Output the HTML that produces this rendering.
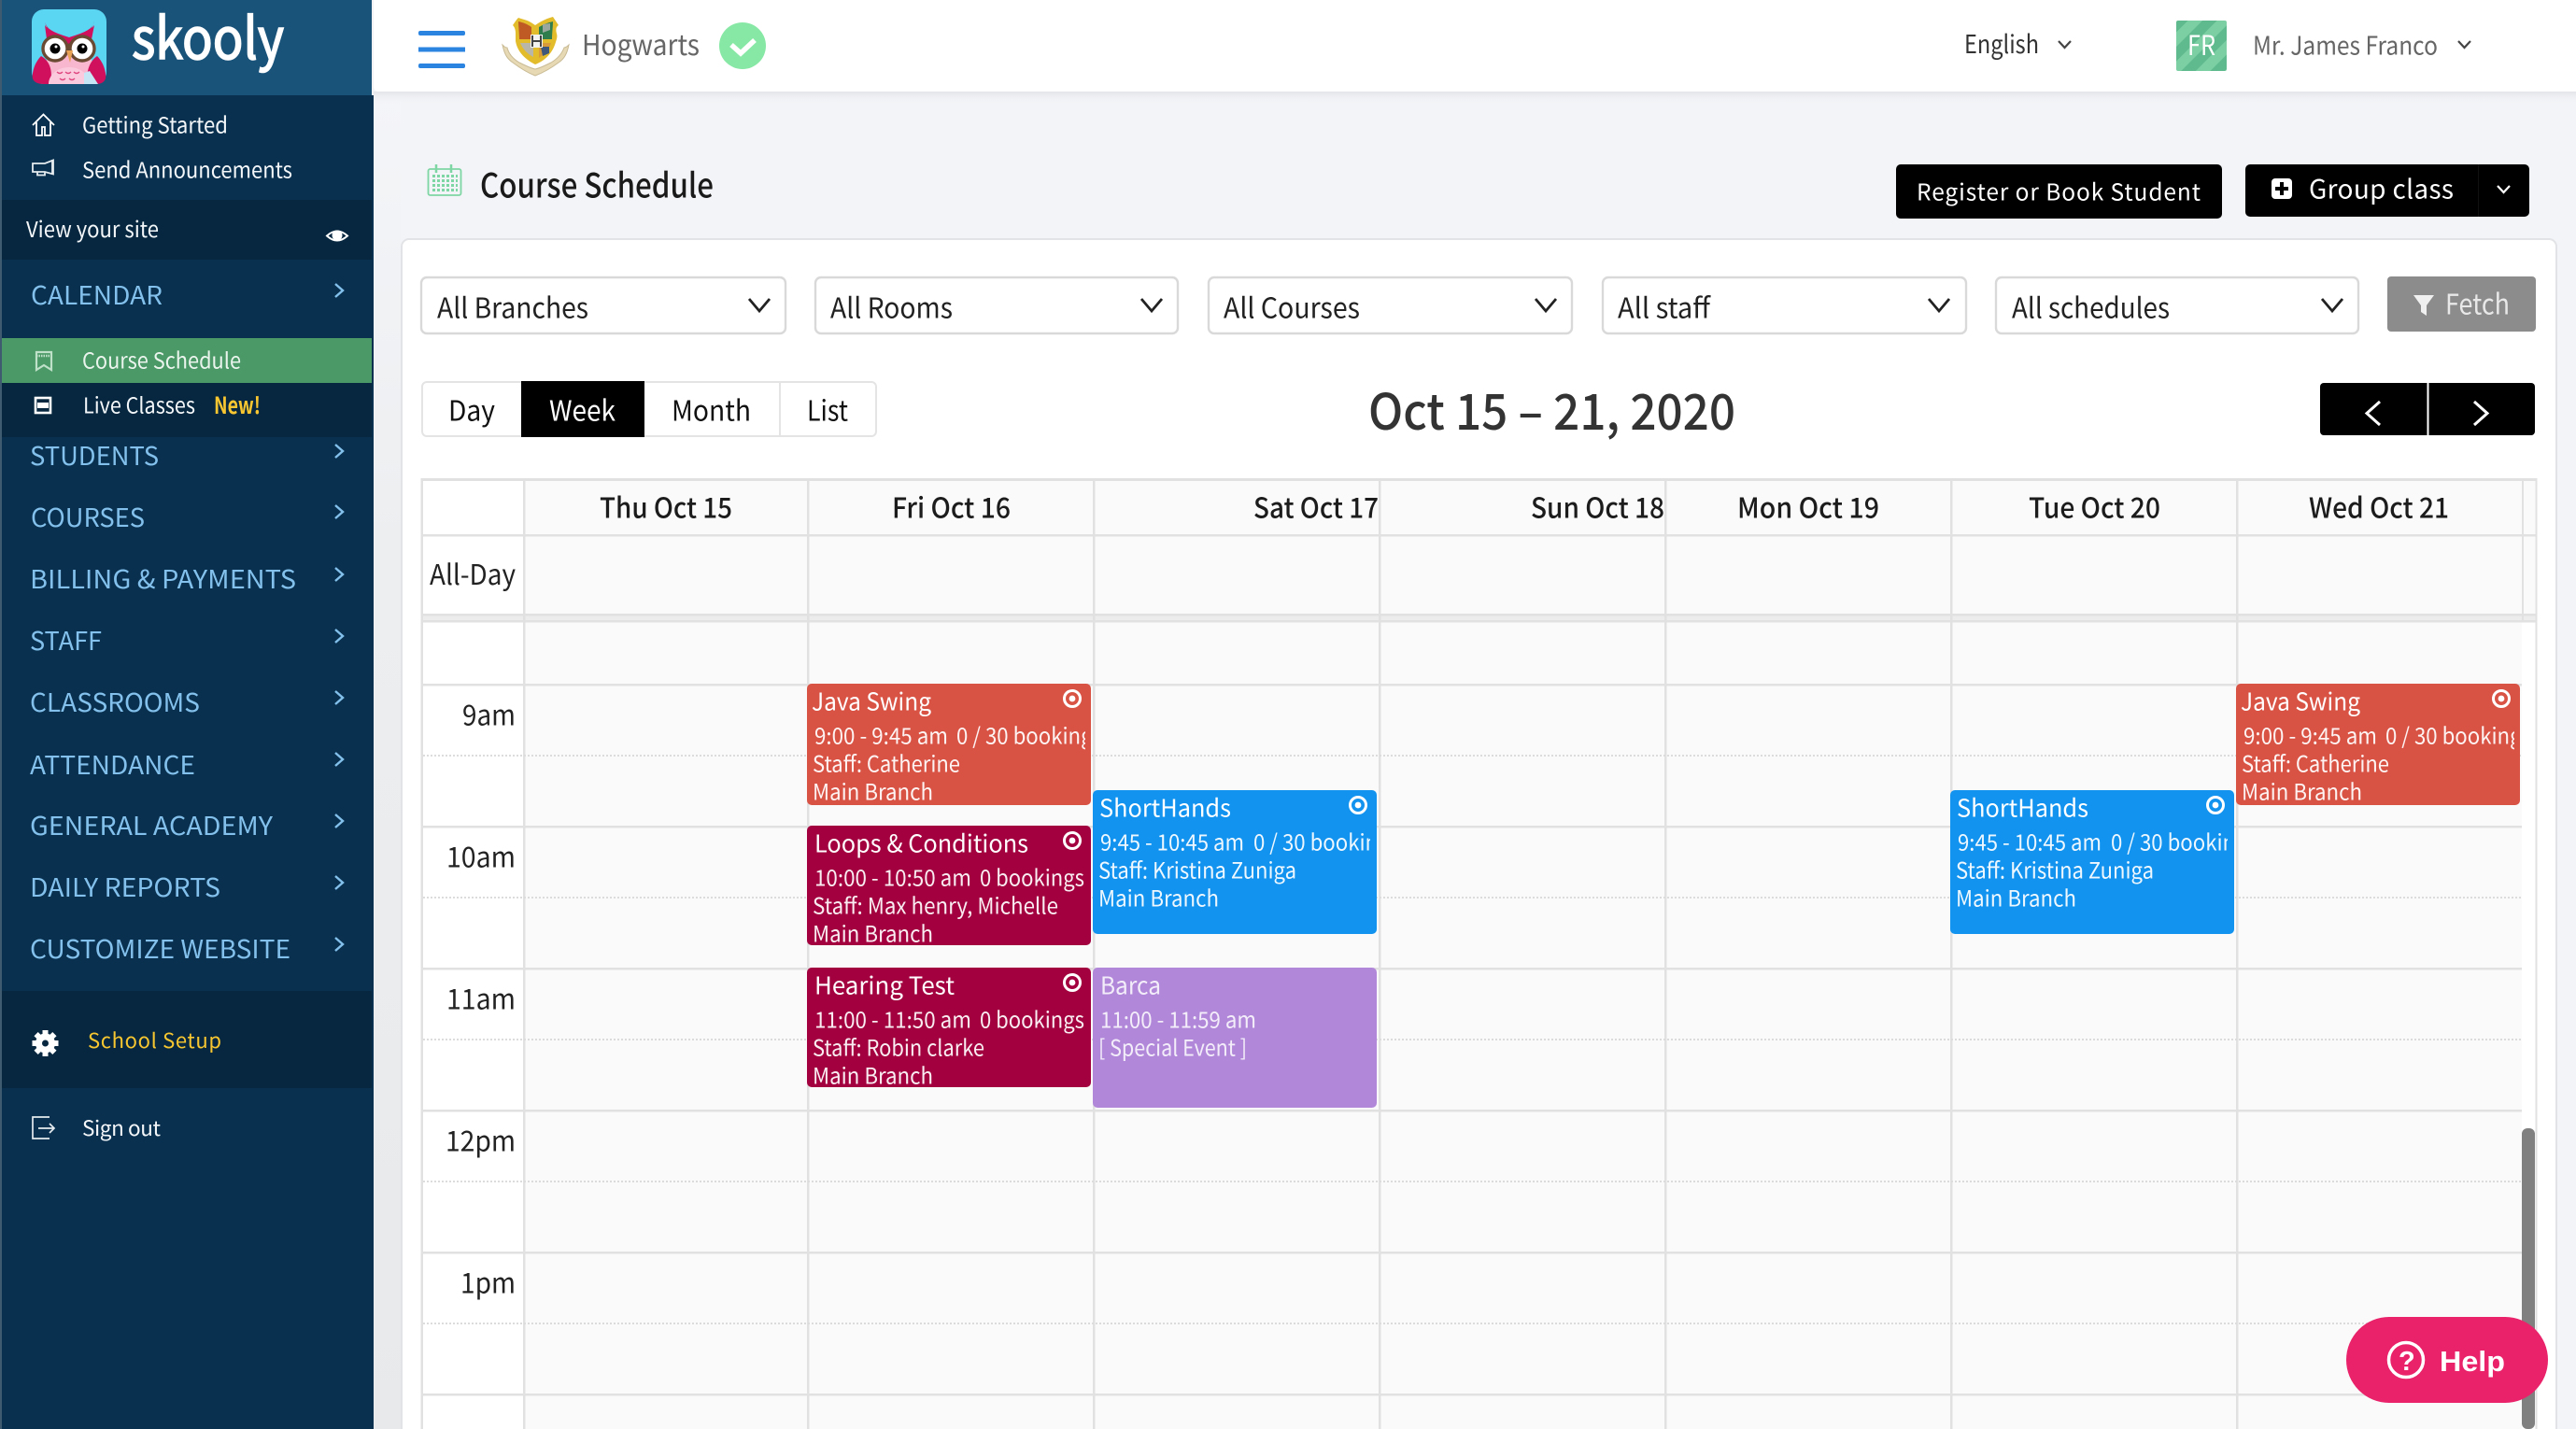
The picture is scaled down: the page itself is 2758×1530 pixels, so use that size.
<!DOCTYPE html>
<html lang="en"><head><meta charset="utf-8"><title>Course Schedule</title>
<style>
html,body{margin:0;padding:0;background:#f3f4f7;width:2758px;height:1530px;overflow:hidden}
svg{display:block}
text{font-family:"Noto Sans CJK JP","Liberation Sans",sans-serif;white-space:pre}
.s{fill:#f4f7f9;font-size:23.5px}
.n{fill:#83c1ec;font-size:27px}
.d{fill:#222;font-size:30px}
.h{fill:#1c1c1c;font-size:30px;font-weight:500}
.t{fill:#fff;font-size:26px}
.e{fill:#fff;font-size:24px;fill-opacity:.93}
.b{fill:#fff;fill-opacity:.85}
.c{fill:none;stroke:#83c1ec;stroke-width:2.4}
.w{fill:none;stroke:#222;stroke-width:2.8}
</style></head><body>
<svg xmlns="http://www.w3.org/2000/svg" width="2758" height="1530" viewBox="0 0 2758 1530">
<defs>
<linearGradient id="lg" x1="0" y1="0" x2="0" y2="1"><stop offset="0" stop-color="#f4f5f8"/><stop offset=".35" stop-color="#eceef0"/><stop offset="1" stop-color="#e8e9eb"/></linearGradient>
<linearGradient id="sh" x1="0" y1="0" x2="0" y2="1"><stop offset="0" stop-color="#e4e5e8"/><stop offset="1" stop-color="#f3f4f7" stop-opacity="0"/></linearGradient>
<pattern id="st" width="22" height="22" patternUnits="userSpaceOnUse" patternTransform="rotate(45)"><rect width="22" height="22" fill="#5fba8e"/><rect width="11" height="22" fill="#7bcfa3"/></pattern>
<pattern id="cd" width="5" height="5" patternUnits="userSpaceOnUse" x="463" y="187"><rect width="3" height="3" fill="#7fd6a5"/></pattern>
<clipPath id="c1"><rect x="864" y="770" width="298" height="40"/></clipPath>
<clipPath id="c2"><rect x="1170" y="885" width="297" height="40"/></clipPath>
<g id="tg"><circle r="8.5" fill="none" stroke="#fff" stroke-width="3"/><circle r="3.4" fill="#fff"/></g>
<path id="chv" d="M0 0l8 7-8 7"/>
</defs>

<!-- page -->
<rect width="2758" height="1530" fill="#f3f4f7"/>
<rect x="400" y="98" width="29" height="1432" fill="url(#lg)"/>

<!-- sidebar -->
<rect width="400" height="1530" fill="#09304f"/>
<rect width="2" height="1530" fill="#3e5b70"/>
<rect x="2" width="396" height="102" fill="#1a5379"/>
<rect x="398" width="2" height="102" fill="#f0f1f3"/>
<rect x="2" y="214" width="396" height="64" fill="#06273f"/>
<rect x="2" y="362" width="396" height="48" fill="#4a9966"/>
<rect x="2" y="410" width="396" height="58" fill="#06273f"/>
<rect x="2" y="1061" width="396" height="104" fill="#06273f"/>

<!-- owl logo -->
<rect x="34" y="10" width="80" height="80" rx="13" fill="#5ad5f2"/>
<path d="M47 90C44 72 52 48 74 46c22 2 30 26 27 44z" fill="#f9b6cf"/>
<path d="M48 23c2 10 8 14 26 25 18-11 24-15 27-25-2 8-8 11-27 17-19-6-24-9-26-17z" fill="#d0105c"/>
<path d="M48 27c6 8 18 11 26 18 8-7 20-10 27-18l-3 15-24 8-24-8z" fill="#d0105c"/>
<path d="M60 40l14 8 14-8 10 14-24 14-24-14z" fill="#f9b6cf"/>
<path d="M44 60C36 68 34 80 35 84q2 6 12 6h6c4-10 2-24-9-30zM104 60c8 8 10 20 9 24q-2 6-10 6h-8c-4-10 0-24 9-30z" fill="#d0105c"/>
<path d="M52 90c0-10 10-18 22-18 12 0 22 8 22 18z" fill="#fbcbdd"/>
<path d="M90 78l6-2 9 14H90z" fill="#c7e6f5"/>
<g fill="none" stroke="#e0457f" stroke-width="1.4"><path d="M61 77q3 3 6 0M70 77q3 3 6 0M79 77q3 3 6 0M64 84q3 3 6 0M74 84q3 3 6 0"/></g>
<circle cx="59" cy="52" r="13" fill="#fff" stroke="#6b4a33" stroke-width="3.4"/><circle cx="88" cy="52" r="13" fill="#fff" stroke="#6b4a33" stroke-width="3.4"/>
<path d="M72 49q2-2 3 0" stroke="#6b4a33" stroke-width="3" fill="none"/>
<circle cx="59" cy="52" r="5.5" fill="#000"/><circle cx="88" cy="52" r="5.5" fill="#000"/><circle cx="60" cy="50" r="1.5" fill="#fff"/><circle cx="89" cy="50" r="1.5" fill="#fff"/>
<path d="M71 54h7l-3 13z" fill="#e9a154"/>
<text x="141" y="63" fill="#fff" font-size="61" font-weight="400" textLength="163" lengthAdjust="spacingAndGlyphs" stroke="#fff" stroke-width="1.6">skooly</text>

<!-- sidebar top links -->
<path d="M35 134l11.500-11.500L58 134M39 131v14h6v-9h3v9h6v-14" fill="none" stroke="#fff" stroke-width="1.8"/>
<path d="M35 175h13l9-3.500v15l-9-2.500H35zM40 184v3.500h8V184M56 171v16" fill="none" stroke="#e5ebef" stroke-width="1.800"/>
<text class="s" x="88" y="142.500" textLength="156" lengthAdjust="spacingAndGlyphs">Getting Started</text>
<text class="s" x="88" y="190.500" textLength="225" lengthAdjust="spacingAndGlyphs">Send Announcements</text>
<text class="s" x="28" y="254" textLength="142" lengthAdjust="spacingAndGlyphs">View your site</text>
<path d="M350 252.500q11-10 22 0q-11 10-22 0z" fill="none" stroke="#fff" stroke-width="2"/><circle cx="361" cy="252" r="5.500" fill="#fff"/>

<!-- nav -->
<text class="n" x="33" y="326" textLength="141" lengthAdjust="spacingAndGlyphs">CALENDAR</text>
<use href="#chv" x="359" y="304" class="c"/>
<path d="M39 377h16v19l-8-5-8 5z" fill="none" stroke="#bfe0c9" stroke-width="2.200"/><path d="M39 381h16" stroke="#bfe0c9" stroke-width="2.500" stroke-dasharray="1.500 1"/>
<text class="s" x="88" y="394.500" textLength="170" lengthAdjust="spacingAndGlyphs" style="fill:#eaf4ed">Course Schedule</text>
<rect x="38" y="426" width="16" height="16" fill="none" stroke="#fff" stroke-width="2.600"/><rect x="40" y="431" width="12" height="6" fill="#fff"/>
<text class="s" x="89" y="442.500" textLength="120" lengthAdjust="spacingAndGlyphs">Live Classes</text>
<text x="229" y="443" fill="#f8c630" font-size="25" font-weight="700" textLength="50" lengthAdjust="spacingAndGlyphs">New!</text>
<text class="n" x="32" y="498" textLength="138" lengthAdjust="spacingAndGlyphs">STUDENTS</text>
<use href="#chv" x="359" y="476" class="c"/>
<text class="n" x="33" y="564" textLength="122" lengthAdjust="spacingAndGlyphs">COURSES</text>
<use href="#chv" x="359" y="541" class="c"/>
<text class="n" x="32" y="630" textLength="285" lengthAdjust="spacingAndGlyphs">BILLING &amp; PAYMENTS</text>
<use href="#chv" x="359" y="608" class="c"/>
<text class="n" x="32" y="696" textLength="77" lengthAdjust="spacingAndGlyphs">STAFF</text>
<use href="#chv" x="359" y="674" class="c"/>
<text class="n" x="32" y="762" textLength="182" lengthAdjust="spacingAndGlyphs">CLASSROOMS</text>
<use href="#chv" x="359" y="740" class="c"/>
<text class="n" x="32" y="829" textLength="177" lengthAdjust="spacingAndGlyphs">ATTENDANCE</text>
<use href="#chv" x="359" y="806" class="c"/>
<text class="n" x="32" y="894" textLength="260" lengthAdjust="spacingAndGlyphs">GENERAL ACADEMY</text>
<use href="#chv" x="359" y="872" class="c"/>
<text class="n" x="32" y="960" textLength="204" lengthAdjust="spacingAndGlyphs">DAILY REPORTS</text>
<use href="#chv" x="359" y="938" class="c"/>
<text class="n" x="32" y="1026" textLength="279" lengthAdjust="spacingAndGlyphs">CUSTOMIZE WEBSITE</text>
<use href="#chv" x="359" y="1004" class="c"/>

<!-- school setup -->
<g transform="translate(48.500 1117)" fill="#fff"><circle r="7" fill="none" stroke="#fff" stroke-width="7"/><path d="M-3-14h6v5h-6zM-3 9h6v5h-6zM-14-3h5v6h-5zM9-3h5v6h-5z"/><path d="M-3-14h6v5h-6zM-3 9h6v5h-6zM-14-3h5v6h-5zM9-3h5v6h-5z" transform="rotate(45)"/></g>
<text x="94" y="1122" fill="#f8c630" font-size="22" textLength="143" lengthAdjust="spacing">School Setup</text>
<path d="M53 1196H35v23h18M41 1208h17M53 1203l5 5-5 5" fill="none" stroke="#e4eaee" stroke-width="1.700"/>
<text class="s" x="88" y="1216" textLength="84" lengthAdjust="spacing" style="font-size:22.500px">Sign out</text>

<!-- header -->
<rect x="400" y="98" width="2358" height="14" fill="url(#sh)"/>
<path d="M400 0H2758V98H406q-6 0-6-6z" fill="#fff"/>
<g fill="#2b85e0"><rect x="448" y="33" width="50" height="5" rx="2"/><rect x="448" y="50.500" width="50" height="5"/><rect x="448" y="68" width="50" height="5" rx="2"/></g>

<!-- crest -->
<path d="M538 48c2 10 5 15 11 19 8 6 16 11 24 14 8-3 17-8 25-14 6-4 9-9 11-19-2 2-4 3-5 3-3 8-9 13-14 16-6 3-12 6-17 7-5-1-11-4-17-7-5-3-11-8-13-16-2 0-3-1-5-3z" fill="#e6d9b4" stroke="#c9bb94" stroke-width="1"/>
<path d="M549 27c2-3 4-6 6-8 6 2 11 3 15 6l3 2 3-2c5-3 9-5 16-7 2 3 4 6 6 9-3 2-3 5-2 9 1 3 0 6-1 9-3 11-11 20-22 24-10-5-19-13-21-25 0-3 0-6 0-8 0-4-1-7-3-9z" fill="#e3bc2c"/>
<path d="M555 23c5 1 10 3 14 6v13h-13c0-7-1-14-1-19z" fill="#bf5a24"/>
<path d="M577 29c5-3 10-5 15-6 0 5-1 13-1 19h-14z" fill="#2f7d4c"/>
<path d="M581 26l8-1v7l-8 3z" fill="#9aa79f"/>
<path d="M557 46h14v15c-6-3-11-8-14-15z" fill="#b8b6a8"/>
<path d="M577 46h13c-2 7-7 12-13 16z" fill="#d99a3a"/>
<path d="M579 50h9v7l-7 3z" fill="#40597a"/>
<path d="M568 37h13v14h-13z" fill="#f2f2f0"/>
<path d="M570 38v12M579 38v12M570 44h9" stroke="#444" stroke-width="2"/>

<text x="623" y="59" fill="#666" font-size="30" textLength="126" lengthAdjust="spacingAndGlyphs">Hogwarts</text>
<circle cx="795" cy="49" r="25" fill="#86e8a4"/><path d="M783 48l10 9 15-14" fill="none" stroke="#fff" stroke-width="5.500"/>
<text x="2103" y="57" fill="#333" font-size="27" textLength="80" lengthAdjust="spacingAndGlyphs">English</text>
<path d="M2204 44l6.500 7 6.500-7" fill="none" stroke="#444" stroke-width="2.200"/>
<rect x="2330" y="22" width="54" height="54" rx="2" fill="url(#st)"/>
<text x="2342" y="59" fill="#fff" font-size="29" textLength="30" lengthAdjust="spacingAndGlyphs">FR</text>
<text x="2412" y="58.500" fill="#666" font-size="27" textLength="198" lengthAdjust="spacingAndGlyphs">Mr. James Franco</text>
<path d="M2632 44l6.500 7 6.500-7" fill="none" stroke="#444" stroke-width="2.200"/>

<!-- title bar -->
<rect x="458.500" y="181" width="35" height="28" rx="2" fill="none" stroke="#7fd6a5" stroke-width="1.800"/>
<path d="M467 176v9M483 176v9" stroke="#7fd6a5" stroke-width="2.500"/>
<rect x="463" y="187" width="27" height="19" fill="url(#cd)"/>
<text x="514" y="211.500" fill="#1a1a1a" font-size="36" font-weight="500" textLength="250" lengthAdjust="spacingAndGlyphs">Course Schedule</text>
<rect x="2030" y="176" width="349" height="58" rx="5" fill="#000"/>
<text x="2052" y="214.500" fill="#fff" font-size="24.500" textLength="304" lengthAdjust="spacing">Register or Book Student</text>
<rect x="2404" y="176" width="304" height="56" rx="5" fill="#000"/>
<rect x="2653" y="176" width="1" height="56" fill="#111"/>
<rect x="2432" y="191" width="22" height="22" rx="4" fill="#fff"/><path d="M2443 195v14M2436 202h14" stroke="#000" stroke-width="4"/>
<text x="2472" y="212.500" fill="#fff" font-size="28" textLength="155" lengthAdjust="spacing">Group class</text>
<path d="M2674 199l6.500 7 6.500-7" fill="none" stroke="#fff" stroke-width="2.200"/>

<!-- card -->
<rect x="430" y="256" width="2307" height="1300" rx="8" fill="#fff" stroke="#e2e3e6" stroke-width="2"/>

<!-- filters -->
<g fill="#fff" stroke="#d9d9d9" stroke-width="2.400">
<rect x="451" y="297" width="390" height="60" rx="6"/><rect x="873" y="297" width="388" height="60" rx="6"/><rect x="1294" y="297" width="389" height="60" rx="6"/><rect x="1716" y="297" width="389" height="60" rx="6"/><rect x="2137" y="297" width="388" height="60" rx="6"/>
</g>
<text class="d" x="468" y="340.500" textLength="162" lengthAdjust="spacingAndGlyphs">All Branches</text>
<text class="d" x="889" y="340.500" textLength="131" lengthAdjust="spacingAndGlyphs">All Rooms</text>
<text class="d" x="1310" y="340.500" textLength="146" lengthAdjust="spacingAndGlyphs">All Courses</text>
<text class="d" x="1732" y="340.500" textLength="99" lengthAdjust="spacingAndGlyphs">All staff</text>
<text class="d" x="2154" y="340.500" textLength="169" lengthAdjust="spacingAndGlyphs">All schedules</text>
<path class="w" d="M802 320l11 13 11-13M1222 320l11 13 11-13M1644 320l11 13 11-13M2065 320l11 13 11-13M2486 320l11 13 11-13"/>
<rect x="2556" y="296" width="159" height="59" rx="4" fill="#8c8c8c"/>
<path d="M2584 316h22l-8 11v11l-6-4v-7z" fill="#f0f0f0"/>
<text x="2618" y="336.500" fill="#e8e8e8" font-size="30" textLength="69" lengthAdjust="spacingAndGlyphs">Fetch</text>

<!-- view switch -->
<rect x="452" y="409" width="486" height="58" rx="5" fill="#fff" stroke="#e4e4e4" stroke-width="2"/>
<rect x="558" y="408" width="132" height="60" fill="#000"/>
<rect x="834" y="409" width="2" height="58" fill="#e4e4e4"/>
<text class="d" x="480" y="450.500" textLength="50" lengthAdjust="spacingAndGlyphs" style="fill:#111">Day</text>
<text class="d" x="588" y="450.500" textLength="71" lengthAdjust="spacingAndGlyphs" style="fill:#fff">Week</text>
<text class="d" x="719" y="450.500" textLength="85" lengthAdjust="spacingAndGlyphs" style="fill:#111">Month</text>
<text class="d" x="864" y="450.500" textLength="44" lengthAdjust="spacingAndGlyphs" style="fill:#111">List</text>
<text x="1465" y="460" fill="#333" font-size="53" font-weight="500" textLength="393" lengthAdjust="spacingAndGlyphs">Oct 15 – 21, 2020</text>
<rect x="2484" y="410" width="230" height="56" rx="4" fill="#000"/><rect x="2598.500" y="410" width="2" height="56" fill="#fff"/>
<path d="M2548 430l-14 12.500 14 12.500M2649 430l14 12.500-14 12.500" fill="none" stroke="#fff" stroke-width="3"/>

<!-- grid -->
<rect x="452" y="514" width="2263" height="1016" fill="#fff"/>
<rect x="562" y="514" width="2138" height="1016" fill="#fafafa"/>
<rect x="2700" y="514" width="15" height="151" fill="#fafafa"/>
<rect x="452" y="514" width="109" height="144" fill="#fff"/>
<rect x="451" y="658" width="2265" height="7" fill="#ececec"/>
<g fill="#e1e1e1">
<rect x="451" y="512" width="2265" height="3"/><rect x="451" y="572" width="2265" height="2.500"/><rect x="451" y="657" width="2265" height="2.500"/><rect x="451" y="664" width="2265" height="2.500"/>
<rect x="451" y="732" width="2249" height="2.500"/><rect x="451" y="884" width="2249" height="2.500"/><rect x="451" y="1036" width="2249" height="2.500"/><rect x="451" y="1188" width="2249" height="2.500"/><rect x="451" y="1340" width="2249" height="2.500"/><rect x="451" y="1492" width="2249" height="2.500"/>
<rect x="450.500" y="512" width="2.500" height="1018"/><rect x="560" y="512" width="2.500" height="1018"/><rect x="864" y="512" width="2.500" height="1018"/><rect x="1170" y="512" width="2.500" height="1018"/><rect x="1476" y="512" width="2.500" height="1018"/><rect x="1782" y="512" width="2.500" height="1018"/><rect x="2088" y="512" width="2.500" height="1018"/><rect x="2394" y="512" width="2.500" height="1018"/><rect x="2700" y="512" width="2" height="153"/><rect x="2714.500" y="512" width="2" height="1018"/>
</g>
<g stroke="#dcdcdc" stroke-width="2" stroke-dasharray="2 2"><path d="M453 809H2700M453 961H2700M453 1113H2700M453 1265H2700M453 1417H2700"/></g>
<rect x="2700" y="1208" width="14" height="322" rx="6" fill="#808080"/>

<!-- day headers -->
<text class="h" x="642" y="554.500" textLength="142" lengthAdjust="spacingAndGlyphs">Thu Oct 15</text>
<text class="h" x="955" y="554.500" textLength="127" lengthAdjust="spacingAndGlyphs">Fri Oct 16</text>
<text class="h" x="1342" y="554.500" textLength="134" lengthAdjust="spacingAndGlyphs">Sat Oct 17</text>
<text class="h" x="1639" y="554.500" textLength="143" lengthAdjust="spacingAndGlyphs">Sun Oct 18</text>
<text class="h" x="1860" y="554.500" textLength="152" lengthAdjust="spacingAndGlyphs">Mon Oct 19</text>
<text class="h" x="2172" y="554.500" textLength="141" lengthAdjust="spacingAndGlyphs">Tue Oct 20</text>
<text class="h" x="2472" y="554.500" textLength="150" lengthAdjust="spacingAndGlyphs">Wed Oct 21</text>

<!-- time labels -->
<text class="d" x="460" y="626" textLength="92" lengthAdjust="spacingAndGlyphs">All-Day</text>
<text class="d" x="495" y="776.500" textLength="57" lengthAdjust="spacingAndGlyphs">9am</text>
<text class="d" x="478" y="928.500" textLength="74" lengthAdjust="spacingAndGlyphs">10am</text>
<text class="d" x="478" y="1080.500" textLength="74" lengthAdjust="spacingAndGlyphs">11am</text>
<text class="d" x="477" y="1232.500" textLength="75" lengthAdjust="spacingAndGlyphs">12pm</text>
<text class="d" x="493" y="1384.500" textLength="59" lengthAdjust="spacingAndGlyphs">1pm</text>

<!-- events: Fri -->
<g>
<rect x="864" y="732" width="304" height="130" rx="5" fill="#d95345"/>
<text class="t" x="869" y="760.500" textLength="128" lengthAdjust="spacingAndGlyphs">Java Swing</text>
<use href="#tg" x="1148" y="748"/>
<text class="e" x="872" y="796.500" textLength="143" lengthAdjust="spacingAndGlyphs">9:00 - 9:45 am</text>
<text class="e" x="1024" y="796.500" textLength="156" lengthAdjust="spacingAndGlyphs" clip-path="url(#c1)">0 / 30 bookings</text>
<text class="e" x="870" y="826.500" textLength="158" lengthAdjust="spacingAndGlyphs">Staff: Catherine</text>
<text class="e" x="870" y="856.500" textLength="129" lengthAdjust="spacingAndGlyphs">Main Branch</text>
</g>
<g>
<rect x="864" y="884" width="304" height="128" rx="5" fill="#a3003f"/>
<text class="t" x="872" y="912.500" textLength="229" lengthAdjust="spacingAndGlyphs">Loops &amp; Conditions</text>
<use href="#tg" x="1148" y="900"/>
<text class="e" x="872" y="948.500" textLength="168" lengthAdjust="spacingAndGlyphs">10:00 - 10:50 am</text>
<text class="e" x="1049" y="948.500" textLength="112" lengthAdjust="spacingAndGlyphs">0 bookings</text>
<text class="e" x="870" y="978.500" textLength="263" lengthAdjust="spacingAndGlyphs">Staff: Max henry, Michelle</text>
<text class="e" x="870" y="1008.500" textLength="129" lengthAdjust="spacingAndGlyphs">Main Branch</text>
</g>
<g>
<rect x="864" y="1036" width="304" height="128" rx="5" fill="#a3003f"/>
<text class="t" x="872" y="1064.500" textLength="150" lengthAdjust="spacingAndGlyphs">Hearing Test</text>
<use href="#tg" x="1148" y="1052"/>
<text class="e" x="872" y="1100.500" textLength="168" lengthAdjust="spacingAndGlyphs">11:00 - 11:50 am</text>
<text class="e" x="1049" y="1100.500" textLength="112" lengthAdjust="spacingAndGlyphs">0 bookings</text>
<text class="e" x="870" y="1130.500" textLength="184" lengthAdjust="spacingAndGlyphs">Staff: Robin clarke</text>
<text class="e" x="870" y="1160.500" textLength="129" lengthAdjust="spacingAndGlyphs">Main Branch</text>
</g>
<!-- Sat -->
<g>
<rect x="1170" y="846" width="304" height="154" rx="5" fill="#1193ef"/>
<text class="t" x="1177" y="874.500" textLength="141" lengthAdjust="spacingAndGlyphs">ShortHands</text>
<use href="#tg" x="1454" y="862"/>
<text class="e" x="1178" y="910.500" textLength="154" lengthAdjust="spacingAndGlyphs">9:45 - 10:45 am</text>
<text class="e" x="1342" y="910.500" textLength="156" lengthAdjust="spacingAndGlyphs" clip-path="url(#c2)">0 / 30 bookings</text>
<text class="e" x="1176" y="940.500" textLength="212" lengthAdjust="spacingAndGlyphs">Staff: Kristina Zuniga</text>
<text class="e" x="1176" y="970.500" textLength="129" lengthAdjust="spacingAndGlyphs">Main Branch</text>
</g>
<g>
<rect x="1170" y="1036" width="304" height="150" rx="5" fill="#b188d9"/>
<text class="t b" x="1178" y="1064.500" textLength="65" lengthAdjust="spacingAndGlyphs">Barca</text>
<text class="e b" x="1178" y="1100.500" textLength="167" lengthAdjust="spacingAndGlyphs">11:00 - 11:59 am</text>
<text class="e b" x="1176" y="1130.500" textLength="159" lengthAdjust="spacingAndGlyphs">[ Special Event ]</text>
</g>
<!-- Tue -->
<g transform="translate(918 0)">
<rect x="1170" y="846" width="304" height="154" rx="5" fill="#1193ef"/>
<text class="t" x="1177" y="874.500" textLength="141" lengthAdjust="spacingAndGlyphs">ShortHands</text>
<use href="#tg" x="1454" y="862"/>
<text class="e" x="1178" y="910.500" textLength="154" lengthAdjust="spacingAndGlyphs">9:45 - 10:45 am</text>
<text class="e" x="1342" y="910.500" textLength="156" lengthAdjust="spacingAndGlyphs" clip-path="url(#c2)">0 / 30 bookings</text>
<text class="e" x="1176" y="940.500" textLength="212" lengthAdjust="spacingAndGlyphs">Staff: Kristina Zuniga</text>
<text class="e" x="1176" y="970.500" textLength="129" lengthAdjust="spacingAndGlyphs">Main Branch</text>
</g>
<!-- Wed -->
<g transform="translate(1530 0)">
<rect x="864" y="732" width="304" height="130" rx="5" fill="#d95345"/>
<text class="t" x="869" y="760.500" textLength="128" lengthAdjust="spacingAndGlyphs">Java Swing</text>
<use href="#tg" x="1148" y="748"/>
<text class="e" x="872" y="796.500" textLength="143" lengthAdjust="spacingAndGlyphs">9:00 - 9:45 am</text>
<text class="e" x="1024" y="796.500" textLength="156" lengthAdjust="spacingAndGlyphs" clip-path="url(#c1)">0 / 30 bookings</text>
<text class="e" x="870" y="826.500" textLength="158" lengthAdjust="spacingAndGlyphs">Staff: Catherine</text>
<text class="e" x="870" y="856.500" textLength="129" lengthAdjust="spacingAndGlyphs">Main Branch</text>
</g>

<!-- help -->
<rect x="2512" y="1410" width="216" height="92" rx="46" fill="#e9226a"/>
<circle cx="2576" cy="1456" r="18.500" fill="none" stroke="#fff" stroke-width="3.500"/>
<text x="2568" y="1467" fill="#fff" font-size="29" font-weight="700" style="font-family:'Liberation Sans',sans-serif">?</text>
<text x="2612" y="1468" fill="#fff" font-size="31" font-weight="700" textLength="70" lengthAdjust="spacingAndGlyphs" style="font-family:'Liberation Sans',sans-serif">Help</text>
</svg>
</body></html>
